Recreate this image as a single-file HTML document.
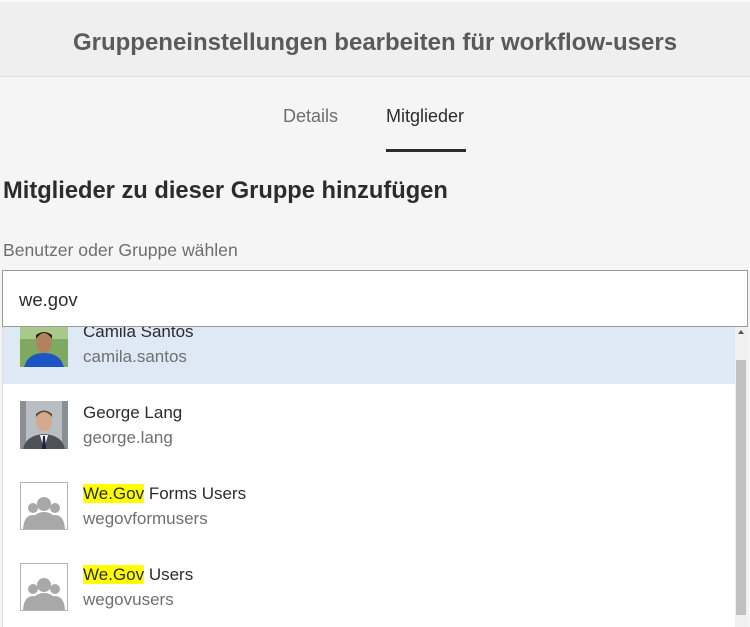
<!DOCTYPE html>
<html><head><meta charset="utf-8"><style>
*{margin:0;padding:0;box-sizing:border-box}
body{width:750px;height:627px;overflow:hidden;background:#f5f5f5;font-family:"Liberation Sans",sans-serif;position:relative}
.hdr{position:absolute;left:0;top:0;width:750px;height:77px;background:#efefef;border-bottom:1px solid #dcdcdc;border-top:2px solid #fafafa}
.hdr div{position:absolute;left:0;right:0;top:27px;text-align:center;font-size:24px;font-weight:bold;color:#5a5a5a}
.tab{position:absolute;top:106px;font-size:18px}
.ul{position:absolute;left:386px;top:149px;width:80px;height:3px;background:#2c2c2c}
h1{position:absolute;left:3px;top:178px;font-size:23.7px;font-weight:bold;color:#2c2c2c}
.lbl{position:absolute;left:3px;top:240px;font-size:17.6px;color:#6e6e6e}
.inp{position:absolute;left:2px;top:270px;width:746px;height:57px;background:#fff;border:1px solid #9a9a9a}
.inp span{position:absolute;left:16px;top:18px;font-size:18.5px;color:#2c2c2c}
.list{position:absolute;left:2px;top:327px;width:746px;height:300px;background:#fff;overflow:hidden;border-left:1px solid #ddd}
.row{position:absolute;left:0;width:733px;height:81px}
.av{position:absolute;left:17px;width:48px;height:48px}
.n{position:absolute;left:80px;font-size:17px;color:#2c2c2c}
.u{position:absolute;left:80px;font-size:17px;color:#707070}
mark{background:#ffff00;color:#2c2c2c}
.sb{position:absolute;left:735px;top:327px;width:13px;height:300px;background:#f0f0f0}
.th{position:absolute;left:736px;top:360px;width:10px;height:255px;background:#c1c1c1}
</style></head><body>
<div class="hdr"><div>Gruppeneinstellungen bearbeiten für workflow-users</div></div>
<div class="tab" style="left:283px;color:#6e6e6e">Details</div>
<div class="tab" style="left:386px;color:#2c2c2c">Mitglieder</div>
<div class="ul"></div>
<h1>Mitglieder zu dieser Gruppe hinzufügen</h1>
<div class="lbl">Benutzer oder Gruppe wählen</div>
<div class="inp"><span>we.gov</span></div>
<div class="list">
 <div class="row" style="top:-24px;background:#dfe8f5">
  <svg class="av" style="top:16px" viewBox="0 0 48 48"><rect width="48" height="48" fill="#7fa960"/><rect x="0" y="0" width="48" height="20" fill="#a8c98a"/><ellipse cx="24" cy="24" rx="8" ry="10" fill="#b0825e"/><path d="M16 20 Q24 8 32 20 L32 16 Q24 10 16 16Z" fill="#2a1a12"/><path d="M4 48 Q8 34 24 34 Q40 34 44 48Z" fill="#1d55c4"/></svg>
  <div class="n" style="top:19px">Camila Santos</div><div class="u" style="top:44px">camila.santos</div></div>
 <div class="row" style="top:57px">
  <svg class="av" style="top:17px" viewBox="0 0 48 48"><rect width="48" height="48" fill="#8a8f94"/><rect x="6" y="0" width="36" height="48" fill="#b9bec2"/><ellipse cx="24" cy="20" rx="8" ry="10" fill="#d4a98c"/><path d="M16 16 Q24 6 32 16 L32 13 Q24 6 16 13Z" fill="#5a4636"/><path d="M3 48 Q6 34 24 33 Q42 34 45 48Z" fill="#4e5258"/><path d="M20 34 L24 48 L28 34Z" fill="#fff"/><path d="M23 35 L22 48 L26 48 L25 35Z" fill="#1c2340"/></svg>
  <div class="n" style="top:19px">George Lang</div><div class="u" style="top:44px">george.lang</div></div>
 <div class="row" style="top:138px">
  <svg class="av" style="top:17px" viewBox="0 0 48 48"><rect x="0.5" y="0.5" width="47" height="47" fill="#fff" stroke="#b5b5b5"/><g fill="#a8a8a8"><circle cx="13" cy="26" r="5"/><circle cx="35" cy="26" r="5"/><path d="M3 47 Q4 33 13 33 Q22 33 23 47Z"/><path d="M25 47 Q26 33 35 33 Q44 33 45 47Z"/><circle cx="24" cy="22" r="7"/><path d="M10 47 Q11 30 24 30 Q37 30 38 47Z"/></g></svg>
  <div class="n" style="top:19px"><mark>We.Gov</mark> Forms Users</div><div class="u" style="top:44px">wegovformusers</div></div>
 <div class="row" style="top:219px">
  <svg class="av" style="top:17px" viewBox="0 0 48 48"><rect x="0.5" y="0.5" width="47" height="47" fill="#fff" stroke="#b5b5b5"/><g fill="#a8a8a8"><circle cx="13" cy="26" r="5"/><circle cx="35" cy="26" r="5"/><path d="M3 47 Q4 33 13 33 Q22 33 23 47Z"/><path d="M25 47 Q26 33 35 33 Q44 33 45 47Z"/><circle cx="24" cy="22" r="7"/><path d="M10 47 Q11 30 24 30 Q37 30 38 47Z"/></g></svg>
  <div class="n" style="top:19px"><mark>We.Gov</mark> Users</div><div class="u" style="top:44px">wegovusers</div></div>
</div>
<div class="sb"></div><div class="th"></div>
<div style="position:absolute;left:738px;top:330px;width:0;height:0;border-left:3px solid transparent;border-right:3px solid transparent;border-bottom:4px solid #555"></div>
</body></html>
